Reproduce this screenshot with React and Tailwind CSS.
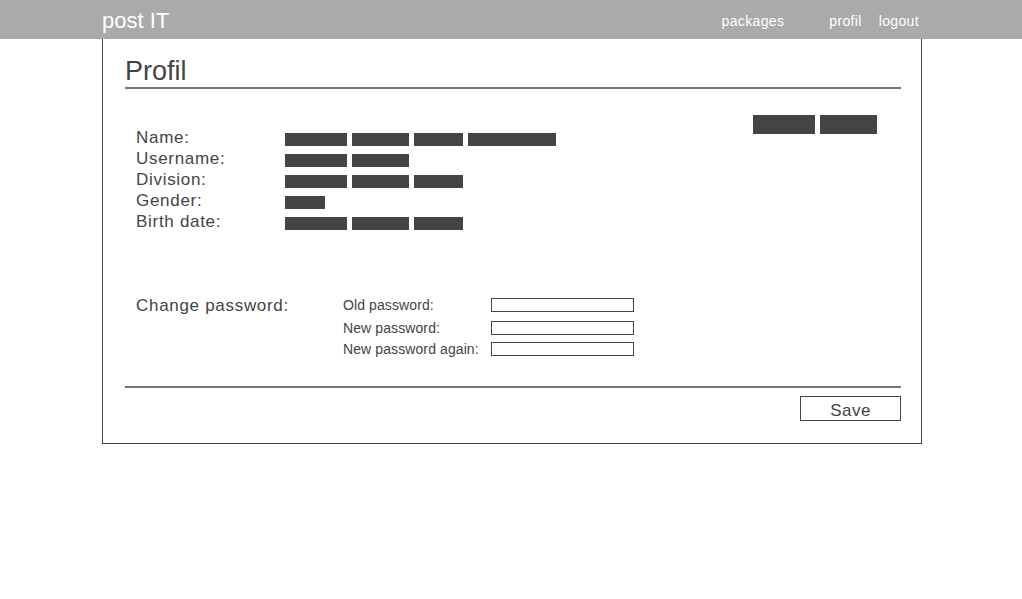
import React from 'react';

const rows = [
  { label: 'Name:', bars: [62, 57, 49, 88] },
  { label: 'Username:', bars: [62, 57] },
  { label: 'Division:', bars: [62, 57, 49] },
  { label: 'Gender:', bars: [40] },
  { label: 'Birth date:', bars: [62, 57, 49] },
];

const barClass = {
  88: 'w-[88px]',
  62: 'w-[62px]',
  57: 'w-[57px]',
  49: 'w-[49px]',
  40: 'w-[40px]',
};

const pwRows = [
  { label: 'Old password:', mt: 'mt-0' },
  { label: 'New password:', mt: 'mt-[9px]' },
  { label: 'New password again:', mt: 'mt-[7px]' },
];

function App() {
  return (
    <div className="min-h-[599px] bg-white text-[#444] font-['Liberation_Sans',Arial,sans-serif]">
      <div className="h-[39px] bg-[#aaa] text-white">
        <div className="ml-[102px] w-[820px] flex items-center h-full">
          <span className="text-[22px] leading-none mt-[2px]">post IT</span>
          <nav className="ml-auto flex items-center text-[14px] tracking-[0.35px] pr-[3px] mt-[4px]">
            <a className="mr-[45px]">packages</a>
            <a className="mr-[17px]">profil</a>
            <a>logout</a>
          </nav>
        </div>
      </div>

      <div className="ml-[102px] w-[820px] border-x border-b border-[#444] pl-[22px] pr-[20px] pb-[22px]">
        <h1 className="pt-[17px] text-[27px] leading-[30px] border-b-2 border-[#777] pb-[1px]">Profil</h1>

        <div className="flex mt-[26px]">
          <div className="pt-[12px] pl-[11px]">
            {rows.map((r) => (
              <div key={r.label} className="flex items-center h-[21px]">
                <span className="w-[149px] text-[17px] tracking-[0.7px]">{r.label}</span>
                <div className="flex gap-[5px] mt-[3px]">
                  {r.bars.map((w, i) => (
                    <div key={i} className={`${barClass[w]} h-[13px] bg-[#444]`} />
                  ))}
                </div>
              </div>
            ))}
          </div>
          <div className="ml-auto mr-[24px] flex gap-[5px]">
            <div className="w-[62px] h-[19px] bg-[#444]" />
            <div className="w-[57px] h-[19px] bg-[#444]" />
          </div>
        </div>

        <div className="flex mt-[66px] pl-[11px]">
          <span className="w-[207px] text-[17px] tracking-[0.7px] leading-[14px] pt-[1px]">Change password:</span>
          <div className="flex flex-col">
            {pwRows.map((r) => (
              <div key={r.label} className={`flex items-center h-[14px] ${r.mt}`}>
                <span className="w-[148px] text-[14px] tracking-[0.1px]">{r.label}</span>
                <div className="w-[143px] h-[14px] border border-[#444]" />
              </div>
            ))}
          </div>
        </div>

        <div className="mt-[30px] border-t-2 border-[#777]" />
        <div className="flex justify-end mt-[8px]">
          <button className="w-[101px] h-[25px] border border-[#444] text-[17px] tracking-[0.5px] leading-none pt-[3px]">Save</button>
        </div>
      </div>
    </div>
  );
}

export default App;
